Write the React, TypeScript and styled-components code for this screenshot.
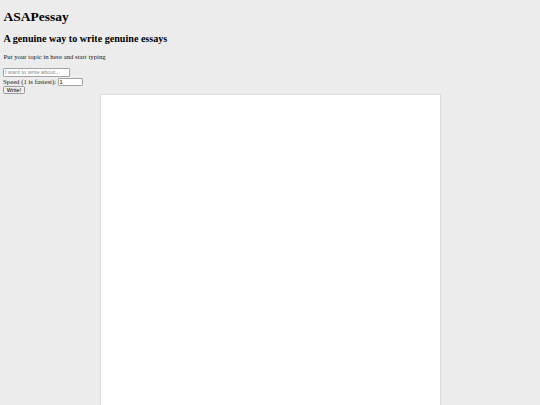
import styled, { createGlobalStyle } from 'styled-components';

const GlobalStyle = createGlobalStyle`
    html, body {
        margin: 0;
        background-color: #ececec;
    }

    body {
        font-family: 'Liberation Serif', 'Times New Roman', serif;
        color: #000;
    }
`;

const App = () => {
    return (
        <>
            <GlobalStyle />
            <StyledPage>
                <StyledHeader>
                    <StyledTitle>ASAPessay</StyledTitle>
                    <StyledSubtitle>A genuine way to write genuine essays</StyledSubtitle>
                    <StyledIntro>Put your topic in here and start typing</StyledIntro>
                </StyledHeader>
                <StyledForm onSubmit={(e) => e.preventDefault()}>
                    <StyledInput
                        type="text"
                        placeholder="I want to write about..."
                        $width={67}
                    />
                    <StyledRow>
                        <StyledLabel htmlFor="speed">Speed (1 is fastest):</StyledLabel>
                        <StyledInput id="speed" type="text" defaultValue="1" $width={25} />
                    </StyledRow>
                    <StyledButton type="submit">Write!</StyledButton>
                </StyledForm>
                <StyledSheet />
            </StyledPage>
        </>
    );
};

const StyledPage = styled.div`
    display: flex;
    flex-direction: column;
    padding: 9px 3px 0;
    min-height: 405px;
    box-sizing: border-box;
    overflow: hidden;
`;

const StyledHeader = styled.div`
    display: flex;
    flex-direction: column;
    padding-left: 0.5px;
`;

const StyledTitle = styled.h1`
    margin: 0;
    font-size: 13.5px;
    font-weight: bold;
    line-height: 15.5px;
`;

const StyledSubtitle = styled.h2`
    margin: 8.4px 0 0;
    font-size: 10.1px;
    font-weight: bold;
    line-height: 11.6px;
`;

const StyledIntro = styled.p`
    margin: 9px 0 0;
    font-size: 6.75px;
    line-height: 7.8px;
    color: #222;
`;

const StyledForm = styled.form`
    display: flex;
    flex-direction: column;
    align-items: flex-start;
    margin-top: 7px;
`;

const StyledRow = styled.div`
    display: flex;
    align-items: center;
    gap: 1.5px;
    margin-top: 1px;
`;

const StyledLabel = styled.label`
    font-size: 6.75px;
    line-height: 8.4px;
    color: #222;
`;

const StyledInput = styled.input<{ $width: number }>`
    box-sizing: border-box;
    width: ${(p) => p.$width}px;
    height: 8.4px;
    padding: 0 1px;
    border: 1px solid #a4a4a4;
    border-radius: 1px;
    background: #fff;
    font-family: 'Liberation Sans', Arial, sans-serif;
    font-size: 5.6px;
    color: #000;
    outline: none;

    &::placeholder {
        color: #8a8a8a;
    }
`;

const StyledButton = styled.button`
    box-sizing: border-box;
    width: 22px;
    height: 8px;
    margin-top: 0.3px;
    padding: 0;
    border: 1px solid #9a9a9a;
    border-radius: 1.5px;
    background: #efefef;
    font-family: 'Liberation Sans', Arial, sans-serif;
    font-size: 5.6px;
    line-height: 6px;
    color: #000;
`;

const StyledSheet = styled.div`
    box-sizing: border-box;
    align-self: center;
    width: 341px;
    flex: 1;
    background: #fff;
    border: 1px solid #dcdcdc;
    border-bottom: none;
`;

export default App;
